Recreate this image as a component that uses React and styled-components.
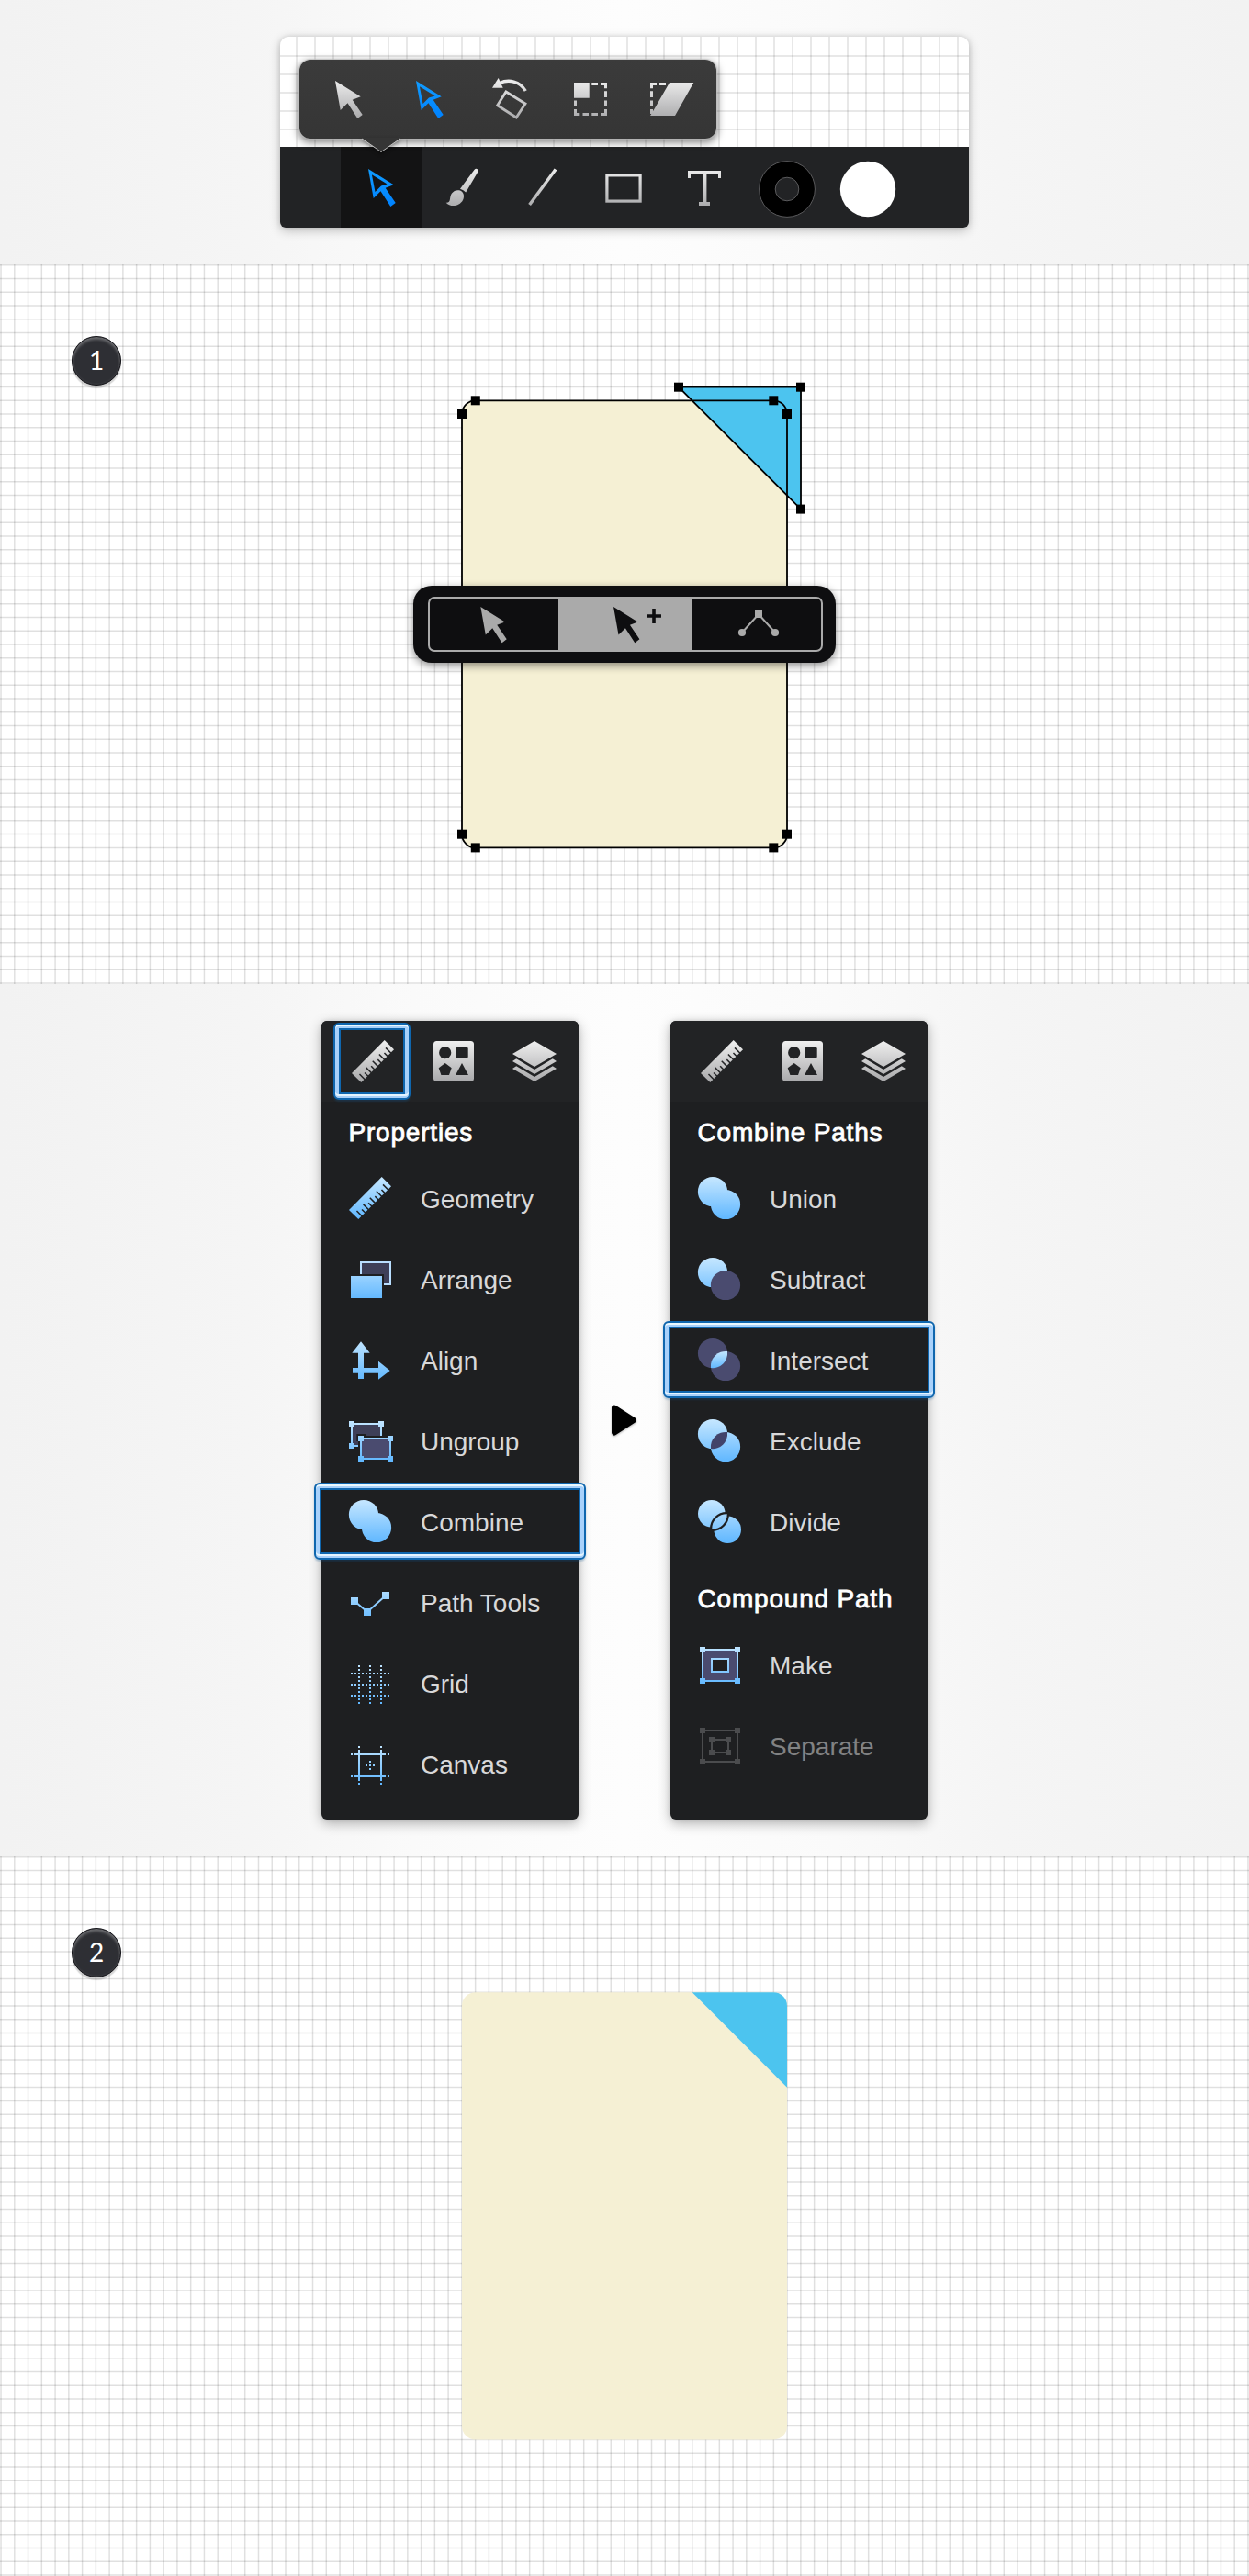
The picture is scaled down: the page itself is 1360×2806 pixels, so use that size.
import React from 'react';
import styled, { createGlobalStyle, css } from 'styled-components';

const GlobalStyle = createGlobalStyle`
  * { box-sizing: border-box; }
  body { margin: 0; background: #fff; }
  #root { width: 1360px; font-family: 'Liberation Sans', Arial, sans-serif; }
`;

/* ---------- page bands ---------- */

const Page = styled.main`
  display: flex;
  flex-direction: column;
  width: 1360px;
`;

const Band = styled.section`
  display: flex;
  justify-content: center;
  align-items: center;
  height: ${(p) => p.$height}px;
  background: linear-gradient(to right, #f2f2f2 0%, #f5f5f5 20%, #fafafa 33%, #fdfdfd 50%, #fafafa 67%, #f5f5f5 80%, #f2f2f2 100%);
`;

const CanvasBand = styled.section`
  position: relative;
  height: 784px;
  padding: 78px;
  overflow: hidden;
  background: #fff;
`;

const Artwork = styled.svg`
  position: absolute;
  top: 0;
  left: 0;
  width: 1360px;
  height: 784px;
`;

const StepBadge = styled.div`
  position: relative;
  z-index: 1;
  display: flex;
  align-items: center;
  justify-content: center;
  width: 54px;
  height: 54px;
  padding-bottom: 3px;
  border: 1.5px solid #131318;
  border-radius: 50%;
  background: #2e2f34;
  box-shadow: 0 3px 1px rgba(0, 0, 0, 0.16), inset 0 3px 3px rgba(255, 255, 255, 0.26), inset 0 0 3px rgba(255, 255, 255, 0.12);
  color: #fff;
  font: 400 28px/32px Lato, 'DejaVu Sans', sans-serif;
`;

/* ---------- toolbar ---------- */

const ToolWindow = styled.div`
  position: relative;
  display: flex;
  flex-direction: column;
  justify-content: flex-end;
  width: 750px;
  height: 208px;
  border-radius: 9px 9px 6px 6px;
  background:
    repeating-linear-gradient(to right, transparent 0 17px, rgba(0, 0, 0, 0.09) 17px 19px, transparent 19px 20px),
    repeating-linear-gradient(to bottom, rgba(0, 0, 0, 0.09) 0 2px, transparent 2px 20px) 0 20px no-repeat,
    #fff;
  box-shadow: 0 3px 12px rgba(0, 0, 0, 0.24), 0 0 5px rgba(0, 0, 0, 0.1);
`;

const ToolBar = styled.div`
  display: flex;
  height: 88px;
  padding-left: 66px;
  border-radius: 0 0 6px 6px;
  background: #222325;
`;

const ToolButton = styled.div`
  display: flex;
  align-items: center;
  justify-content: center;
  width: 88px;
  height: ${(p) => p.$height || 88}px;
  background: ${(p) => (p.$active ? '#131314' : 'transparent')};
`;

const Popover = styled.div`
  position: absolute;
  top: 25px;
  left: 21px;
  display: flex;
  width: 454px;
  height: 86px;
  padding-left: 9px;
  border-radius: 12px;
  background: linear-gradient(#3b3b3b, #353535);
  box-shadow: 0 0 0 1px rgba(190, 190, 190, 0.65), 0 3px 8px 1px rgba(0, 0, 0, 0.5);
`;

const PopoverTip = styled.svg`
  position: absolute;
  top: 85px;
  left: 68px;
  width: 42px;
  height: 18px;
  overflow: visible;
  filter: drop-shadow(0 2px 2px rgba(0, 0, 0, 0.4));
`;

const Glyph = styled.svg`
  display: block;
  flex: none;
  width: 48px;
  height: 48px;
  overflow: visible;
`;

/* ---------- canvas callout ---------- */

const Callout = styled.div`
  position: absolute;
  top: 350px;
  left: 450px;
  width: 460px;
  height: 84px;
  padding: 12px 14px 12px 16px;
  border-radius: 20px;
  background: #0e0e10;
  box-shadow: 0 3px 10px rgba(0, 0, 0, 0.45);
`;

const Segments = styled.div`
  display: flex;
  height: 60px;
  border: 2px solid #aaa;
  border-radius: 7px;
`;

const Segment = styled.div`
  display: flex;
  flex: ${(p) => (p.$active ? '0 0 146px' : '1')};
  align-items: center;
  justify-content: center;
  background: ${(p) => (p.$active ? '#aaa' : 'transparent')};
`;

/* ---------- panels ---------- */

const PanelRow = styled.div`
  display: flex;
  align-items: center;
  gap: 36px;
`;

const Panel = styled.div`
  width: 280px;
  height: 870px;
  border-radius: 6px;
  background: #1e1f21;
  box-shadow: 0 4px 14px rgba(0, 0, 0, 0.3), 0 0 5px rgba(0, 0, 0, 0.12);
`;

const PanelTabs = styled.div`
  display: flex;
  height: 88px;
  padding-left: 12px;
  border-radius: 6px 6px 0 0;
  background: #222325;
`;

const focusRing = css`
  &::after {
    content: '';
    position: absolute;
    border: 2px solid #0f66ae;
    border-radius: 6px;
    box-shadow:
      inset 0 2px 0 #eaf8ff,
      inset 0 -2px 0 #a8d1fb,
      inset 0 -4px 0 #e4f4ff,
      inset 0 0 0 4px #a8d1fb,
      inset 0 0 0 6px #0f66ae,
      0 2px 2px rgba(20, 90, 150, 0.25);
  }
`;

const PanelTab = styled.div`
  position: relative;
  display: flex;
  align-items: center;
  justify-content: center;
  width: 88px;
  ${(p) => p.$selected && focusRing}
  &::after { inset: 2px 3px 2px 1px; }
`;

const PanelHeading = styled.h2`
  display: flex;
  align-items: flex-end;
  height: ${(p) => p.$height}px;
  margin: 0;
  padding: 0 0 11px 29.5px;
  color: #fff;
  font-size: 28px;
  font-weight: 400;
  line-height: 32px;
  letter-spacing: 0.8px;
  -webkit-text-stroke: 0.8px #fff;
`;

const PanelItem = styled.div`
  position: relative;
  display: flex;
  align-items: center;
  gap: 31px;
  height: 88px;
  padding-left: 29px;
  color: ${(p) => (p.$disabled ? '#818283' : '#d8d8d9')};
  ${(p) => p.$selected && focusRing}
  &::after { inset: 2px -8px; }
`;

const ItemLabel = styled.span`
  padding-top: 4px;
  font-size: 28px;
  line-height: 32px;
`;

const NextMarker = styled.svg`
  width: 28px;
  height: 34px;
  filter: drop-shadow(0 1px 1px rgba(0, 0, 0, 0.3));
`;

/* ---------- drawing data ---------- */

const CELL = 14.76;
const GRID_TOP = 0.7;
const gridColumns = Array.from({ length: 93 }, (_, i) => 680 + (i - 46) * CELL);
const gridRows = Array.from({ length: 54 }, (_, i) => GRID_TOP + i * CELL);

const SHEET = { x: 503, y: 148.3, w: 354, h: 487.1, r: 14.75 };

const handles = [
  [739, 133.7], [872, 133.7], [872, 266.6],
  [517.8, 148.3], [503, 163], [842.3, 148.3], [857, 163],
  [503, 620.7], [517.8, 635.4], [857, 620.7], [842.3, 635.4],
];

function GridLines() {
  return (
    <g stroke="#000" strokeOpacity="0.12" strokeWidth="1.5">
      {gridColumns.map((x) => <line key={`c${x}`} x1={x} x2={x} y1="0" y2="784" />)}
      {gridRows.map((y) => <line key={`r${y}`} x1="0" x2="1360" y1={y} y2={y} />)}
    </g>
  );
}

const GradientDefs = styled.svg`
  position: absolute;
  width: 0;
  height: 0;
`;

function Gradients() {
  return (
    <GradientDefs aria-hidden="true">
      <defs>
        <linearGradient id="silver" gradientUnits="userSpaceOnUse" x1="0" y1="2" x2="0" y2="46">
          <stop offset="0" stopColor="#efefef" />
          <stop offset="1" stopColor="#a9a9ab" />
        </linearGradient>
        <linearGradient id="azure" gradientUnits="userSpaceOnUse" x1="0" y1="4" x2="0" y2="44">
          <stop offset="0" stopColor="#109cff" />
          <stop offset="1" stopColor="#0082ff" />
        </linearGradient>
        <linearGradient id="sky" gradientUnits="userSpaceOnUse" x1="0" y1="2" x2="0" y2="46">
          <stop offset="0" stopColor="#c4e6ff" />
          <stop offset="1" stopColor="#62b8ff" />
        </linearGradient>
        <linearGradient id="skyLens" gradientUnits="userSpaceOnUse" x1="0" y1="15" x2="0" y2="33">
          <stop offset="0" stopColor="#c4e6ff" />
          <stop offset="1" stopColor="#62b8ff" />
        </linearGradient>
      </defs>
    </GradientDefs>
  );
}

const SILVER = 'url(#silver)';
const SKY = 'url(#sky)';
const DUSK = '#4a4b6f';
const PANEL = '#1e1f21';

/* ---------- icons ---------- */

const ARROW = 'M10 4 37.7 21.3 28.7 24.7 39.7 41 34.3 45 23.5 28.3 15.7 36Z';

const PointerIcon = () => <Glyph><path d={ARROW} fill={SILVER} /></Glyph>;

const DirectPointerIcon = () => (
  <Glyph>
    <path d={`${ARROW}M13.9 10.3 17.5 29 24 22.6 30.6 20.4Z`} fill="url(#azure)" fillRule="evenodd" />
  </Glyph>
);

const RotateIcon = () => (
  <Glyph>
    <path d="M5 11.7 11.7 1 16.7 11.7Z" fill={SILVER} />
    <path d="M13 6.5C23 2 35 4.3 41.3 15" fill="none" stroke={SILVER} strokeWidth="3.4" />
    <path d="M20 16 41 29 31.2 44 10.6 30.8Z" fill="none" stroke={SILVER} strokeWidth="2.8" />
  </Glyph>
);

const ScaleIcon = () => (
  <Glyph fill={SILVER}>
    <path d="M6 6H22.7V22.7H6ZM25.3 6H32V9H25.3ZM35 6H42V12.3H39V9H35ZM39 15.3H42V22H39ZM39 25.5H42V31.5H39ZM39 35H42V42H35V39H39ZM25.3 39H32V42H25.3ZM15.5 39H22V42H15.5ZM6 35H9V39H12.3V42H6ZM6 25.5H9V31.5H6Z" />
  </Glyph>
);

const SkewIcon = () => (
  <Glyph fill={SILVER}>
    <path d="M22 6H48.3L28 42H1L3 39ZM1 6H8V9H4V12.3H1ZM11 6H18V9H11ZM1 15.3H4V22H1ZM1 25.5H4V32H1ZM1 35H4V40H1Z" />
  </Glyph>
);

const BrushIcon = () => (
  <Glyph fill={SILVER}>
    <path d="M37.6 4.7Q39.2 3 40.8 4.3T41.2 7.5L28.2 29.5Q25.6 26.7 22 25.7Z" />
    <path d="M6.7 40.7C12.6 41.2 9.8 34.6 13 30.4 15.2 27.6 18.8 26.4 22 27.6 26 29.3 27 34 25 38 21.4 44.9 11.3 46 6.7 40.7Z" />
  </Glyph>
);

const LineIcon = () => (
  <Glyph><path d="M38 4.6 9.6 43" stroke={SILVER} strokeWidth="3.4" /></Glyph>
);

const RectangleIcon = () => (
  <Glyph><rect x="5.9" y="10.9" width="36.2" height="28.2" fill="none" stroke={SILVER} strokeWidth="3.2" /></Glyph>
);

const TypeIcon = () => (
  <Glyph fill={SILVER}>
    <rect x="6" y="6" width="36" height="4" />
    <rect x="6" y="10" width="3" height="4" />
    <rect x="39" y="10" width="3" height="4" />
    <rect x="22" y="10" width="4.4" height="30" />
    <rect x="18" y="40" width="12" height="4" />
  </Glyph>
);

const StrokeSwatch = () => (
  <Glyph stroke="#5a5a5c">
    <circle cx="26" cy="26" r="30.4" fill="#000" />
    <circle cx="26" cy="26" r="12.8" fill="#222325" />
  </Glyph>
);

const FillSwatch = () => <Glyph><circle cx="26" cy="26" r="30.2" fill="#fff" /></Glyph>;

const RULER_TICKS = Array.from({ length: 9 }, (_, i) => {
  const t = (i + 1) / 10;
  const x = 47 - 35.7 * t;
  const y = 11.2 + 35.8 * t;
  const length = i % 2 ? 3.4 : 5.4;
  return { x, y, length };
});

const RulerIcon = ({ fill = SKY, back = PANEL }) => (
  <Glyph>
    <path d="M36.7 1 47 11.2 11.3 47 1 36.9Z" fill={fill} />
    {RULER_TICKS.map(({ x, y, length }) => (
      <line key={x} x1={x + 0.5} y1={y + 0.5} x2={x - length} y2={y - length} stroke={back} strokeWidth="1.5" />
    ))}
  </Glyph>
);

const ShapesIcon = () => (
  <Glyph>
    <rect x="2" y="2" width="44" height="44" rx="3.5" fill={SILVER} />
    <g fill="#222325">
      <circle cx="14.7" cy="14.7" r="6.6" />
      <rect x="26.7" y="8.5" width="13" height="12.5" rx="2" />
      <path d="M14.7 26 21.7 31.3 19 39H10.4L7.7 31.3ZM33 26 40 39H26Z" />
    </g>
  </Glyph>
);

const LayersIcon = () => (
  <Glyph fill={SILVER}>
    <path d="M24 2 48 16 24 30 0 16Z" />
    <path d="M0 24 4.2 21.3 24 33 43.8 21.3 48 24 24 38Z" />
    <path d="M0 32 4.2 29.3 24 41 43.8 29.3 48 32 24 46Z" />
  </Glyph>
);

const ArrangeIcon = () => (
  <Glyph>
    <rect x="14" y="6" width="32" height="24" fill="#3e3f58" stroke="#b9deff" strokeWidth="2" />
    <rect x="3" y="19" width="36" height="28" fill={PANEL} />
    <rect x="3" y="21" width="34" height="24" fill={SKY} />
  </Glyph>
);

const AlignIcon = () => (
  <Glyph fill={SKY}>
    <path d="M14 4.3 23.7 16.7H17V33H33V25.7L45.7 36 33 45.7V38.8H17V45H11V38.8H5V33H11V16.7H4.3Z" />
  </Glyph>
);

const Corners = ({ xs, ys, skip }) =>
  xs.flatMap((x, i) => ys.map((y, j) =>
    skip === `${i}${j}` ? null : <rect key={`${x}-${y}`} x={x - 3} y={y - 3} width="6" height="6" stroke="none" />));

const UngroupIcon = () => (
  <Glyph>
    <rect x="4" y="6" width="32" height="24" fill="#3e3f58" stroke={SKY} strokeWidth="2" />
    <g fill={SKY}><Corners xs={[4, 36]} ys={[6, 30]} skip="11" /></g>
    <path d="M9.3 17H19V19H50V48H11V32H11V25H9.3Z" fill={PANEL} />
    <rect x="14" y="22" width="32" height="22" fill={DUSK} stroke={SKY} strokeWidth="2" />
    <g fill={SKY}><Corners xs={[14, 46]} ys={[22, 44]} /></g>
  </Glyph>
);

const UnionIcon = () => (
  <Glyph fill={SKY}>
    <circle cx="17" cy="17" r="16.1" />
    <circle cx="31" cy="31" r="16.1" />
  </Glyph>
);

const PathToolsIcon = () => (
  <Glyph fill={SKY}>
    <path d="M7 23 21 35 41 17" fill="none" stroke={SKY} strokeWidth="2" />
    <rect x="3" y="19" width="8" height="8" />
    <rect x="17" y="31" width="8" height="8" />
    <rect x="37" y="13" width="8" height="8" />
  </Glyph>
);

const GridIcon = () => (
  <Glyph stroke={SKY} strokeWidth="2" strokeDasharray="2 2" fill="none">
    <path d="M12 5V47M24 5V47M36 5V47M3 14H45M3 26H45M3 38H45" />
  </Glyph>
);

const CanvasIcon = () => (
  <Glyph stroke={SKY} strokeWidth="2" fill="none">
    <path d="M12 5V7M36 5V7M12 45V47M36 45V47M3 14H5M43 14H45M3 38H5M43 38H45M12 9V43M36 9V43M7 14H41M7 38H41" />
    <path d="M24 21V23M24 25V27M24 29V31M19 26H21M27 26H29" />
  </Glyph>
);

const LENS = 'M33 15.1A16.1 16.1 0 0 0 15 33 16.1 16.1 0 0 0 33 15.1Z';

const SubtractIcon = () => (
  <Glyph>
    <circle cx="17" cy="17" r="16.1" fill={SKY} />
    <circle cx="31" cy="31" r="16.1" fill={DUSK} />
  </Glyph>
);

const IntersectIcon = () => (
  <Glyph>
    <g fill={DUSK}>
      <circle cx="17" cy="17" r="16.1" />
      <circle cx="31" cy="31" r="16.1" />
    </g>
    <path d={LENS} fill="url(#skyLens)" />
  </Glyph>
);

const ExcludeIcon = () => (
  <Glyph>
    <g fill={SKY}>
      <circle cx="17" cy="17" r="16.1" />
      <circle cx="31" cy="31" r="16.1" />
    </g>
    <path d={LENS} fill="#42436a" />
  </Glyph>
);

const DivideIcon = () => (
  <Glyph>
    <g fill={SKY}>
      <circle cx="15.8" cy="15.8" r="14.8" />
      <circle cx="33.2" cy="33.2" r="14.8" />
    </g>
    <path d="M32.7 16.2A16 16 0 0 0 16.2 32.7 16 16 0 0 0 32.7 16.2Z" fill={SKY} stroke={PANEL} strokeWidth="4.4" paintOrder="stroke" />
  </Glyph>
);

const MakeIcon = () => (
  <Glyph>
    <rect x="6" y="8" width="38" height="34" fill={DUSK} stroke={SKY} strokeWidth="2" />
    <rect x="16" y="18" width="18" height="14" fill={PANEL} stroke={SKY} strokeWidth="2" />
    <g fill={SKY}><Corners xs={[6, 44]} ys={[8, 42]} /></g>
  </Glyph>
);

const SeparateIcon = () => (
  <Glyph stroke="#4b4c4e" strokeWidth="2" fill="none">
    <rect x="6" y="8" width="38" height="34" />
    <rect x="16" y="18" width="18" height="14" />
    <g fill="#4b4c4e">
      <Corners xs={[6, 44]} ys={[8, 42]} />
      <Corners xs={[16, 34]} ys={[18, 32]} />
    </g>
  </Glyph>
);

/* ---------- sections ---------- */

const popoverTools = [PointerIcon, DirectPointerIcon, RotateIcon, ScaleIcon, SkewIcon];
const barTools = [DirectPointerIcon, BrushIcon, LineIcon, RectangleIcon, TypeIcon, StrokeSwatch, FillSwatch];

function Toolbar() {
  return (
    <ToolWindow>
      <ToolBar>
        {barTools.map((Icon, i) => <ToolButton key={i} $active={i === 0}><Icon /></ToolButton>)}
      </ToolBar>
      <Popover>
        {popoverTools.map((Icon, i) => <ToolButton key={i} $height={86}><Icon /></ToolButton>)}
        <PopoverTip viewBox="0 0 42 18">
          <path d="M0 0H42V.5L21 15.5 0 .5Z" fill="#353535" />
          <path d="M0 1 21 15.5 42 1" fill="none" stroke="#bdbdbd" strokeWidth="1" />
        </PopoverTip>
      </Popover>
    </ToolWindow>
  );
}

function SelectionCallout() {
  return (
    <Callout>
      <Segments>
        <Segment>
          <Glyph><path d={ARROW} transform="translate(-.2 1.2) scale(.955)" fill="#aaa" /></Glyph>
        </Segment>
        <Segment $active>
          <Glyph fill="#0e0e10">
            <path d={ARROW} transform="translate(1.5 1.2) scale(.955)" />
            <path d="M53.2 7H56.8V13.2H63V16.8H56.8V23H53.2V16.8H47V13.2H53.2Z" />
          </Glyph>
        </Segment>
        <Segment>
          <Glyph fill="#aaa">
            <path d="M8 33 26 13 44 33" fill="none" stroke="#aaa" strokeWidth="2" />
            <rect x="22" y="9" width="8" height="8" />
            <circle cx="8" cy="33" r="4.1" />
            <circle cx="44" cy="33" r="4.1" />
          </Glyph>
        </Segment>
      </Segments>
    </Callout>
  );
}

const panels = [
  {
    selectedTab: 0,
    groups: [
      {
        title: 'Properties',
        height: 61,
        items: [
          ['Geometry', RulerIcon], ['Arrange', ArrangeIcon], ['Align', AlignIcon], ['Ungroup', UngroupIcon],
          ['Combine', UnionIcon, 'selected'], ['Path Tools', PathToolsIcon], ['Grid', GridIcon], ['Canvas', CanvasIcon],
        ],
      },
    ],
  },
  {
    groups: [
      {
        title: 'Combine Paths',
        height: 61,
        items: [
          ['Union', UnionIcon], ['Subtract', SubtractIcon], ['Intersect', IntersectIcon, 'selected'],
          ['Exclude', ExcludeIcon], ['Divide', DivideIcon],
        ],
      },
      { title: 'Compound Path', height: 68, items: [['Make', MakeIcon], ['Separate', SeparateIcon, 'disabled']] },
    ],
  },
];

function ToolPanel({ selectedTab, groups }) {
  return (
    <Panel>
      <PanelTabs>
        <PanelTab $selected={selectedTab === 0}><RulerIcon fill={SILVER} back="#222325" /></PanelTab>
        <PanelTab><ShapesIcon /></PanelTab>
        <PanelTab><LayersIcon /></PanelTab>
      </PanelTabs>
      {groups.map(({ title, height, items }) => (
        <React.Fragment key={title}>
          <PanelHeading $height={height}>{title}</PanelHeading>
          {items.map(([label, Icon, state]) => (
            <PanelItem key={label} $selected={state === 'selected'} $disabled={state === 'disabled'}>
              <Icon />
              <ItemLabel>{label}</ItemLabel>
            </PanelItem>
          ))}
        </React.Fragment>
      ))}
    </Panel>
  );
}

export default function App() {
  return (
    <Page>
      <GlobalStyle />
      <Gradients />

      <Band $height={288}><Toolbar /></Band>

      <CanvasBand>
        <Artwork viewBox="0 0 1360 784">
          <GridLines />
          <rect x={SHEET.x} y={SHEET.y} width={SHEET.w} height={SHEET.h} rx={SHEET.r} fill="#f5f0d4" />
          <path d="M739 133.7H872V266.6Z" fill="#4cc4ef" />
          <g fill="none" stroke="#000" strokeWidth="1.8">
            <path d="M739 133.7H872V266.6Z" />
            <rect x={SHEET.x} y={SHEET.y} width={SHEET.w} height={SHEET.h} rx={SHEET.r} />
          </g>
          {handles.map(([x, y]) => <rect key={`${x},${y}`} x={x - 5} y={y - 5} width="10" height="10" />)}
        </Artwork>
        <StepBadge>1</StepBadge>
        <SelectionCallout />
      </CanvasBand>

      <Band $height={950}>
        <PanelRow>
          <ToolPanel {...panels[0]} />
          <NextMarker viewBox="0 0 28 34">
            <path d="M3 3.5 24 17 3 30.5Z" stroke="#000" strokeWidth="6" strokeLinejoin="round" />
          </NextMarker>
          <ToolPanel {...panels[1]} />
        </PanelRow>
      </Band>

      <CanvasBand>
        <Artwork viewBox="0 0 1360 784">
          <GridLines />
          <rect x={SHEET.x} y={SHEET.y} width={SHEET.w} height={SHEET.h} rx={SHEET.r} fill="#f5f0d4" />
          <path d="M753.7 148.3H842.3A14.75 14.75 0 0 1 857 163V251.7Z" fill="#4cc4ef" />
        </Artwork>
        <StepBadge>2</StepBadge>
      </CanvasBand>
    </Page>
  );
}
